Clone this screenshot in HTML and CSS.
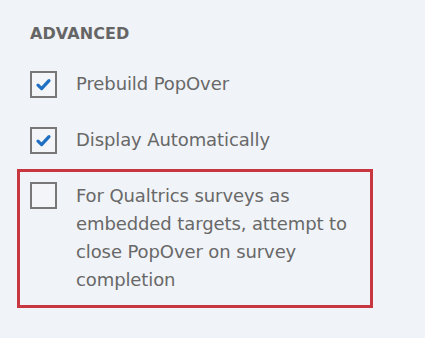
FILE: index.html
```html
<!DOCTYPE html>
<html>
<head>
<meta charset="utf-8">
<link rel="stylesheet" href="styles.css">
</head>
<body>
<section class="panel">
  <h2 class="heading">ADVANCED</h2>
  <ul class="options">
    <li class="option">
      <span class="box checked">
        <svg viewBox="0 0 27 27" width="27" height="27"><path d="M8 14.2 L11.6 17.6 L19 9.6" fill="none" stroke="#1f6fc2" stroke-width="3.2" stroke-linecap="round" stroke-linejoin="round"/></svg>
      </span>
      <span class="label">Prebuild PopOver</span>
    </li>
    <li class="option">
      <span class="box checked">
        <svg viewBox="0 0 27 27" width="27" height="27"><path d="M8 14.2 L11.6 17.6 L19 9.6" fill="none" stroke="#1f6fc2" stroke-width="3.2" stroke-linecap="round" stroke-linejoin="round"/></svg>
      </span>
      <span class="label">Display Automatically</span>
    </li>
    <li class="option multi highlighted">
      <span class="box"></span>
      <span class="label">For Qualtrics surveys as embedded targets, attempt to close PopOver on survey completion</span>
    </li>
  </ul>
</section>
</body>
</html>
```
FILE: styles.css
```css
html, body {
  margin: 0;
  padding: 0;
  background: #f0f3f7;
}
.panel {
  width: 425px;
  height: 338px;
  box-sizing: border-box;
  padding: 23px 0 0 30px;
  font-family: "DejaVu Sans", "Liberation Sans", sans-serif;
  color: #686868;
}
.heading {
  margin: 0;
  font-size: 16px;
  font-weight: bold;
  line-height: 22px;
  color: #656565;
  letter-spacing: 0.1px;
}
.options {
  list-style: none;
  margin: 25px 0 0;
  padding: 0;
  display: flex;
  flex-direction: column;
  gap: 28px;
}
.option {
  display: flex;
  align-items: center;
  gap: 19px;
}
.option.multi {
  align-items: flex-start;
}
.highlighted {
  margin-left: -13px;
  margin-top: -13px;
  width: 356px;
  box-sizing: border-box;
  border: 3px solid #c8373f;
  padding: 10px 10px 11px 10px;
}
.box {
  flex: none;
  width: 27px;
  height: 27px;
  box-sizing: border-box;
  border: 2px solid #787878;
  display: flex;
  align-items: center;
  justify-content: center;
  background: #f3f5f8;
}
.box svg {
  display: block;
  margin: -2px;
}
.label {
  font-size: 18px;
  line-height: 28px;
  letter-spacing: -0.1px;
}
.multi .label {
  width: 290px;
}
```
